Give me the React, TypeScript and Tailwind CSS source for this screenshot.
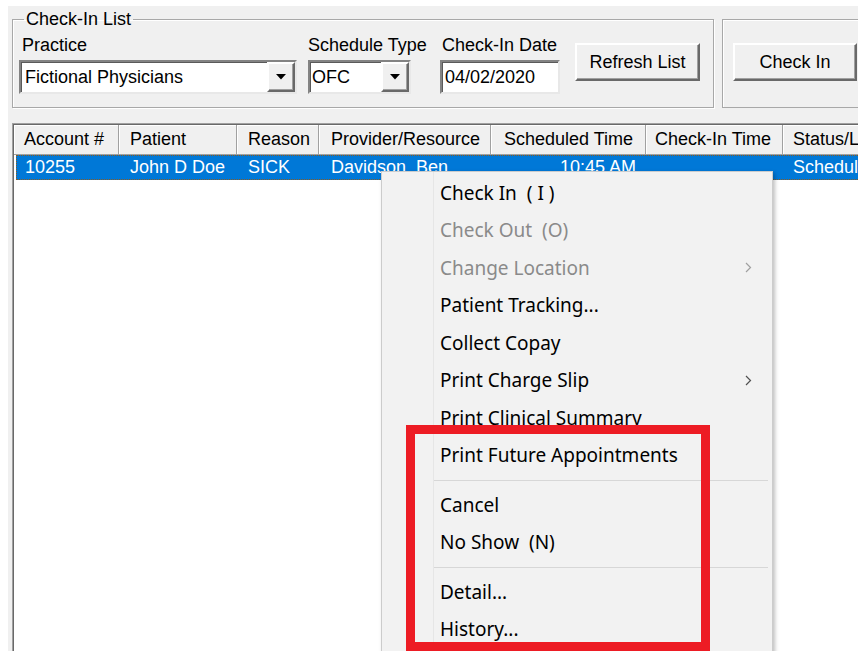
type Column = {
  title: string;
  value: string;
  width: string;
  headPad: string;
  cellPad: string;
};

const columns: Column[] = [
  { title: 'Account #', value: '10255', width: 'w-[105px]', headPad: 'pl-[10px]', cellPad: 'pl-[8px]' },
  { title: 'Patient', value: 'John D Doe', width: 'w-[118px]', headPad: 'pl-[11px]', cellPad: 'pl-[11px]' },
  { title: 'Reason', value: 'SICK', width: 'w-[82px]', headPad: 'pl-[11px]', cellPad: 'pl-[11px]' },
  { title: 'Provider/Resource', value: 'Davidson, Ben', width: 'w-[172px]', headPad: 'pl-[12px]', cellPad: 'pl-[12px]' },
  { title: 'Scheduled Time', value: '10:45 AM', width: 'w-[155px]', headPad: 'pl-[13px]', cellPad: 'justify-end pr-[10px]' },
  { title: 'Check-In Time', value: '', width: 'w-[137px]', headPad: 'pl-[9px]', cellPad: 'pl-[9px]' },
  { title: 'Status/Location', value: 'Scheduled', width: 'w-[170px]', headPad: 'pl-[10px]', cellPad: 'pl-[10px]' },
];

type MenuEntry = { label: string; disabled?: boolean; submenu?: boolean } | 'separator';

const menu: MenuEntry[] = [
  { label: 'Check In  ( I )' },
  { label: 'Check Out  (O)', disabled: true },
  { label: 'Change Location', disabled: true, submenu: true },
  { label: 'Patient Tracking...' },
  { label: 'Collect Copay' },
  { label: 'Print Charge Slip', submenu: true },
  { label: 'Print Clinical Summary' },
  { label: 'Print Future Appointments' },
  'separator',
  { label: 'Cancel' },
  { label: 'No Show  (N)' },
  'separator',
  { label: 'Detail...' },
  { label: 'History...' },
];

// classic raised 3D edge used by buttons and the combo arrows
const raised =
  'bg-[#f0f0f0] border-2 border-t-white border-l-white border-r-[#696969] border-b-[#696969] shadow-[inset_-1px_-1px_0_#a0a0a0]';
const sunken =
  'bg-white border-2 border-t-[#838383] border-l-[#838383] border-r-[#e8e8e8] border-b-[#e8e8e8] shadow-[inset_1px_1px_0_#5a5a5a]';

function DropArrow() {
  return (
    <div className={`w-[28px] h-full flex items-center justify-center ${raised}`}>
      <svg width="10" height="6" viewBox="0 0 10 6">
        <path d="M0 0h10L5 5.5z" fill="#000" />
      </svg>
    </div>
  );
}

function Combo({ text, width, pad }: { text: string; width: string; pad: string }) {
  return (
    <div className={`${width} h-[34px] flex ${sunken}`}>
      <div className={`flex-1 flex items-center ${pad}`}>{text}</div>
      <DropArrow />
    </div>
  );
}

function Chevron({ disabled }: { disabled?: boolean }) {
  return (
    <svg width="7" height="11" viewBox="0 0 7 11" className="mr-[20px]">
      <path d="M1 1l4.5 4.5L1 10" fill="none" stroke={disabled ? '#a0a0a0' : '#505050'} strokeWidth="1.2" />
    </svg>
  );
}

export default function App() {
  return (
    <div className="w-[858px] h-[651px] overflow-hidden bg-white relative font-['Liberation_Sans',Arial,sans-serif] text-[18px] text-black">
      <div className="ml-[8px] mt-[6px] h-[645px] w-[900px] bg-[#f0f0f0] flex flex-col">
        {/* toolbar group boxes */}
        <div className="flex items-start pl-[4px] pt-[3px]">
          <fieldset className="w-[702px] h-[99px] border border-[#a8a8a8] shadow-[inset_1px_1px_0_#ffffff,1px_1px_0_#ffffff] pl-[6px] pt-[6px]">
            <legend className="ml-[5px] px-[2px] leading-[20px]">Check-In List</legend>
            <div className="flex items-start">
              <div className="w-[278px] flex flex-col gap-[5px]">
                <span className="pl-[3px] leading-[20px]">Practice</span>
                <Combo text="Fictional Physicians" width="w-[278px]" pad="pl-[4px]" />
              </div>
              <div className="ml-[11px] w-[120px] flex flex-col gap-[5px]">
                <span className="leading-[20px] whitespace-nowrap">Schedule Type</span>
                <Combo text="OFC" width="w-[103px]" pad="pl-[2px]" />
              </div>
              <div className="ml-[12px] w-[120px] flex flex-col gap-[5px]">
                <span className="pl-[2px] leading-[20px] whitespace-nowrap">Check-In Date</span>
                <div className={`w-[120px] h-[34px] flex items-center pl-[3px] ${sunken}`}>04/02/2020</div>
              </div>
              <button className={`ml-[15px] mt-[8px] w-[125px] h-[38px] ${raised}`}>Refresh List</button>
            </div>
          </fieldset>
          <fieldset className="ml-[8px] mt-[10px] w-[170px] h-[89px] border border-[#a8a8a8] shadow-[inset_1px_1px_0_#ffffff] pl-[10px] pt-[23px]">
            <button className={`w-[124px] h-[38px] ${raised}`}>Check In</button>
          </fieldset>
        </div>

        {/* appointment list */}
        <div className="mt-[15px] ml-[4px] flex-1 border-l border-t border-[#a0a0a0] bg-white">
          <div className="h-full border-l border-t border-[#696969] flex flex-col">
            <div className="flex h-[30px] bg-[#f0f0f0]">
              {columns.map((c) => (
                <div
                  key={c.title}
                  className={`${c.width} shrink-0 flex items-center whitespace-nowrap overflow-hidden border-r border-b border-[#a0a0a0] shadow-[inset_1px_1px_0_#ffffff] ${c.headPad}`}
                >
                  {c.title}
                </div>
              ))}
            </div>
            <div className="flex h-[25px] ml-[2px] bg-[#0078d7] text-white border border-dotted border-[#8b5a1e]">
              {columns.map((c, i) => (
                <div
                  key={c.title}
                  className={`${i === 0 ? 'w-[102px]' : c.width} shrink-0 flex items-center whitespace-nowrap overflow-hidden ${c.cellPad}`}
                >
                  {c.value}
                </div>
              ))}
            </div>
          </div>
        </div>
      </div>

      {/* right-click menu over the selected row */}
      <div className="absolute left-[381px] top-[171px] w-[392px] h-[500px] bg-[#f2f2f2] border border-[#cccccc] shadow-[2px_2px_4px_rgba(0,0,0,0.25)] pt-[2px] font-['Noto_Sans',sans-serif] text-[19px]">
        <div className="absolute left-[51px] top-0 bottom-0 w-px bg-[#e6e6e6]" />
        {menu.map((m, i) =>
          m === 'separator' ? (
            <div key={i} className="h-[12px] flex items-center pl-[51px] pr-[4px]">
              <div className="h-px w-full bg-[#d7d7d7]" />
            </div>
          ) : (
            <div key={i} className="relative h-[37.5px] flex items-center pl-[58px]">
              <span className={`flex-1 whitespace-pre ${m.disabled ? 'text-[#8a8a8a]' : 'text-black'}`}>{m.label}</span>
              {m.submenu && <Chevron disabled={m.disabled} />}
            </div>
          ),
        )}
      </div>

      {/* highlight frame */}
      <div className="absolute left-[406px] top-[425px] w-[304px] h-[226px] border-[9px] border-[#ed1c24]" />
    </div>
  );
}
